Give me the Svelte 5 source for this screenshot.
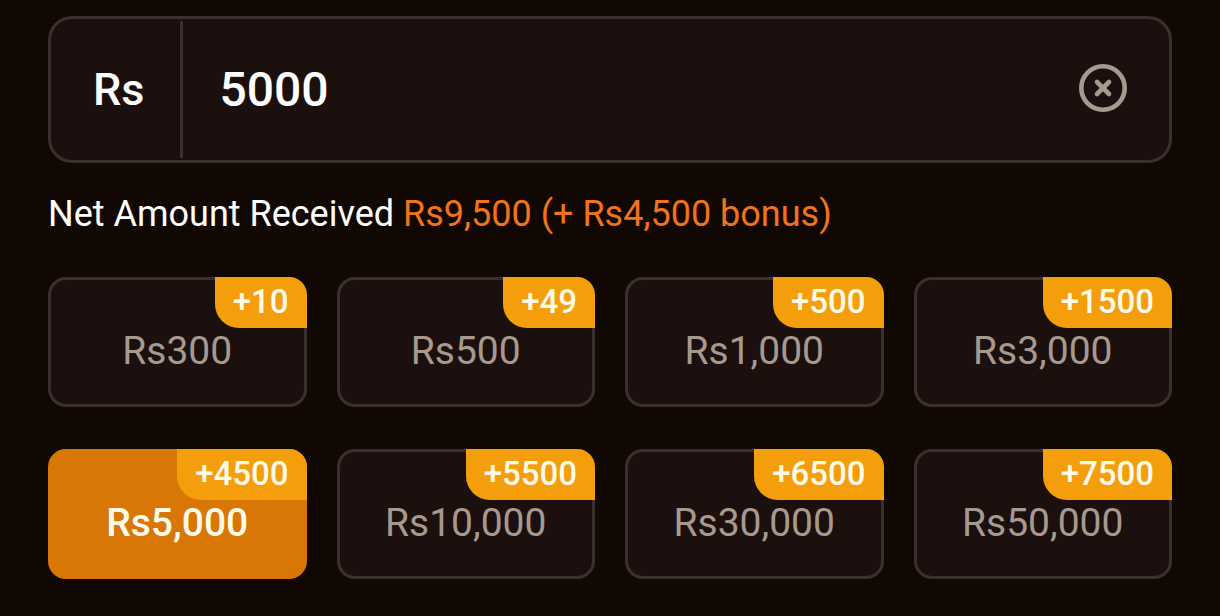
<script lang="ts">
	type Preset = { value: number; bonus: number };

	const presets: Preset[] = [
		{ value: 300, bonus: 10 },
		{ value: 500, bonus: 49 },
		{ value: 1000, bonus: 500 },
		{ value: 3000, bonus: 1500 },
		{ value: 5000, bonus: 4500 },
		{ value: 10000, bonus: 5500 },
		{ value: 30000, bonus: 6500 },
		{ value: 50000, bonus: 7500 }
	];

	let amount = $state('5000');

	// the bonus of the highest preset that the amount reaches
	const bonus = $derived(presets.filter((p) => p.value <= Number(amount)).at(-1)?.bonus ?? 0);
	const net = $derived((Number(amount) || 0) + bonus);

	function money(n: number) {
		return 'Rs' + n.toLocaleString('en-US');
	}
</script>

<main class="deposit">
	<div class="field">
		<label class="currency" for="amount">Rs</label>
		<input id="amount" type="text" inputmode="numeric" autocomplete="off" bind:value={amount} />
		<button class="clear" type="button" aria-label="Clear amount" onclick={() => (amount = '')}>
			<svg viewBox="0 0 48 48" fill="none" stroke="currentColor" aria-hidden="true">
				<circle cx="24" cy="24" r="21.7" stroke-width="4.6" />
				<path d="M18 18 30 30M30 18 18 30" stroke-width="4.6" stroke-linecap="round" />
			</svg>
		</button>
	</div>

	<p class="net">
		Net Amount Received <span>{money(net)} (+ {money(bonus)} bonus)</span>
	</p>

	<div class="presets">
		{#each presets as p (p.value)}
			<button
				class="preset"
				class:active={Number(amount) === p.value}
				type="button"
				onclick={() => (amount = String(p.value))}
			>
				{money(p.value)}
				<span class="badge">+{p.bonus}</span>
			</button>
		{/each}
	</div>
</main>

<style>
	:global(body) {
		margin: 0;
		background: #120803;
	}

	.deposit {
		padding: 16px 48px 36px;
		font-family: Roboto, 'Liberation Sans', sans-serif;
		color: #fff;
	}

	button,
	input {
		font: inherit;
		color: inherit;
		border: 0;
		margin: 0;
		background: none;
	}

	button {
		cursor: pointer;
	}

	.field {
		display: flex;
		align-items: center;
		border: 3px solid #3b302d;
		border-radius: 24px;
		background: #1b100d;
		padding: 2px 42px 2px 0;
		font-weight: 500;
	}

	.currency {
		padding: 0 36px 0 42px;
		border-right: 3px solid #3b302d;
		font-size: 45px;
		line-height: 137px;
	}

	input {
		flex: 1;
		min-width: 0;
		padding: 0 36px;
		font-size: 48px;
		line-height: 60px;
		outline: none;
	}

	.clear {
		display: flex;
		padding: 0 0 3px;
		color: #a8998f;
	}

	.clear svg {
		width: 48px;
		height: 48px;
	}

	.net {
		margin: 30px 0 42px;
		font-size: 36px;
		line-height: 42px;
	}

	.net span {
		color: #f0731e;
	}

	.presets {
		display: grid;
		grid-template-columns: repeat(4, 1fr);
		gap: 42px 30px;
	}

	.preset {
		position: relative;
		padding: 47px 0 29px;
		border: 3px solid #3b302d;
		border-radius: 18px;
		background: #1b100d;
		color: #a8998f;
		font-size: 39px;
		line-height: 48px;
	}

	.preset.active {
		border-color: #d97706;
		background: #d97706;
		color: #fffbeb;
		font-weight: 500;
	}

	.badge {
		position: absolute;
		top: -3px;
		right: -3px;
		padding: 0 18px 1px;
		border-radius: 0 18px 0 24px;
		background: #f59e0b;
		color: #fffbeb;
		font-size: 33px;
		font-weight: 500;
		line-height: 50px;
	}
</style>
